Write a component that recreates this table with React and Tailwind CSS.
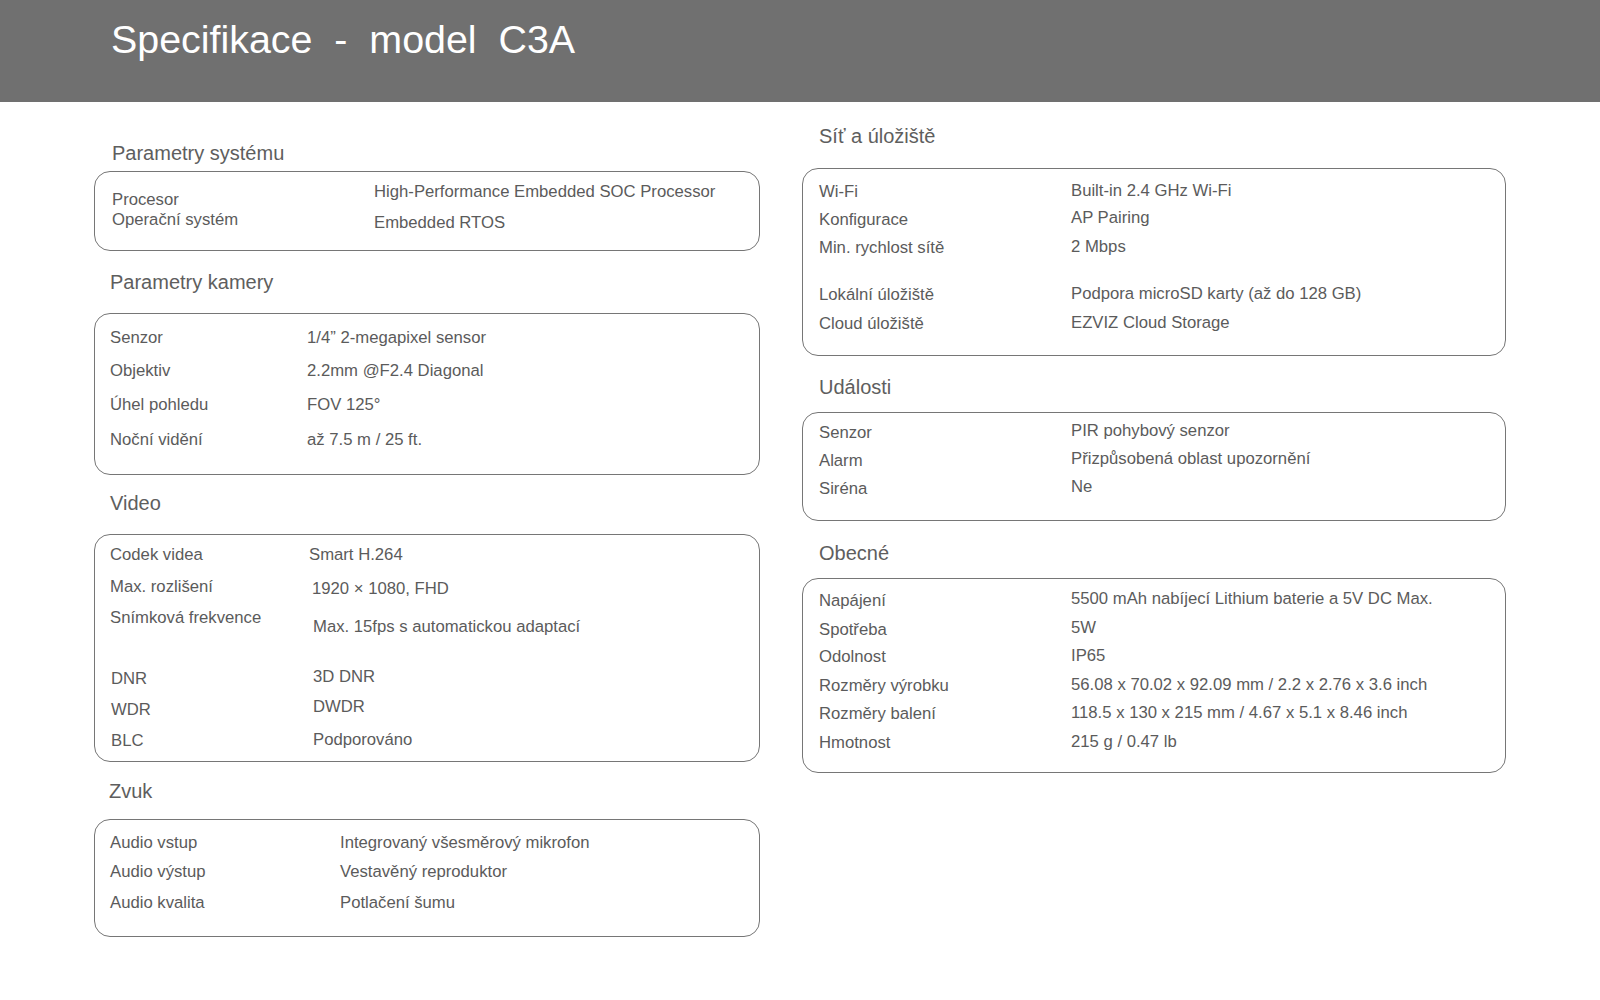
import React from "react";

const font = { fontFamily: '"Liberation Sans", Arial, sans-serif' };

function Col({ items, className }) {
  return (
    <div className={"flex flex-col pt-px " + (className || "")}>
      {items.map((it, i) => (
        <div key={i} className={"leading-[20px] whitespace-nowrap " + it.c}>
          {it.t}
        </div>
      ))}
    </div>
  );
}

function Box({ h, labelCls, valueCls, labels, values }) {
  return (
    <div className={"flex rounded-[16px] border-[1.5px] border-[#767676] text-[16.7px] text-[#5b5b5b] " + h}>
      <Col items={labels} className={labelCls} />
      <Col items={values} />
    </div>
  );
}

function Heading({ children, className }) {
  return (
    <div className={"text-[20px] leading-[24px] text-[#5e5e5e] " + className}>{children}</div>
  );
}

export default function App() {
  return (
    <div className="w-[1600px] h-[1000px] bg-white" style={font}>
      <div className="h-[102px] bg-[#707070] pl-[111px] pt-[19px]">
        <div className="text-[39.4px] leading-[40px] text-white whitespace-pre">
          {"Specifikace  -  model  C3A"}
        </div>
      </div>
      <div className="flex pl-[94px] gap-[42px]">
        {/* Left column */}
        <div className="flex flex-col w-[666px]">
          <Heading className="mt-[39px] ml-[18px]">Parametry systému</Heading>
          <div className="mt-[6px]">
            <Box
              h="h-[80px]"
              labelCls="ml-[17px] w-[262px]"
              labels={[
                { t: "Procesor", c: "mt-[17px]" },
                { t: "Operační systém", c: "mt-0" },
              ]}
              values={[
                { t: "High-Performance Embedded SOC Processor", c: "mt-[9px]" },
                { t: "Embedded RTOS", c: "mt-[11px]" },
              ]}
            />
          </div>
          <Heading className="mt-[19px] ml-[16px]">Parametry kamery</Heading>
          <div className="mt-[19px]">
            <Box
              h="h-[162px]"
              labelCls="ml-[15px] w-[197px]"
              labels={[
                { t: "Senzor", c: "mt-[13px]" },
                { t: "Objektiv", c: "mt-[13px]" },
                { t: "Úhel pohledu", c: "mt-[14px]" },
                { t: "Noční vidění", c: "mt-[15px]" },
              ]}
              values={[
                { t: "1/4” 2-megapixel sensor", c: "mt-[13px]" },
                { t: "2.2mm @F2.4 Diagonal", c: "mt-[13px]" },
                { t: "FOV 125°", c: "mt-[14px]" },
                { t: "až 7.5 m / 25 ft.", c: "mt-[15px]" },
              ]}
            />
          </div>
          <Heading className="mt-[16px] ml-[16px]">Video</Heading>
          <div className="mt-[19px]">
            <Box
              h="h-[228px]"
              labelCls="ml-[15px] w-[199px]"
              labels={[
                { t: "Codek videa", c: "mt-[9px]" },
                { t: "Max. rozlišení", c: "mt-[12px]" },
                { t: "Snímková frekvence", c: "mt-[11px]" },
                { t: "DNR", c: "mt-[41px] ml-px" },
                { t: "WDR", c: "mt-[11px] ml-px" },
                { t: "BLC", c: "mt-[11px] ml-px" },
              ]}
              values={[
                { t: "Smart H.264", c: "mt-[9px]" },
                { t: "1920 × 1080, FHD", c: "mt-[14px] ml-[3px]" },
                { t: "Max. 15fps s automatickou adaptací", c: "mt-[18px] ml-[4px]" },
                { t: "3D DNR", c: "mt-[30px] ml-[4px]" },
                { t: "DWDR", c: "mt-[10px] ml-[4px]" },
                { t: "Podporováno", c: "mt-[13px] ml-[4px]" },
              ]}
            />
          </div>
          <Heading className="mt-[17px] ml-[15px]">Zvuk</Heading>
          <div className="mt-[16px]">
            <Box
              h="h-[118px]"
              labelCls="ml-[15px] w-[230px]"
              labels={[
                { t: "Audio vstup", c: "mt-[12px]" },
                { t: "Audio výstup", c: "mt-[9px]" },
                { t: "Audio kvalita", c: "mt-[11px]" },
              ]}
              values={[
                { t: "Integrovaný všesměrový mikrofon", c: "mt-[12px]" },
                { t: "Vestavěný reproduktor", c: "mt-[9px]" },
                { t: "Potlačení šumu", c: "mt-[11px]" },
              ]}
            />
          </div>
        </div>

        {/* Right column */}
        <div className="flex flex-col w-[704px]">
          <Heading className="mt-[22px] ml-[17px]">Síť a úložiště</Heading>
          <div className="mt-[20px]">
            <Box
              h="h-[188px]"
              labelCls="ml-[16px] w-[252px]"
              labels={[
                { t: "Wi-Fi", c: "mt-[12px]" },
                { t: "Konfigurace", c: "mt-[8px]" },
                { t: "Min. rychlost sítě", c: "mt-[8px]" },
                { t: "Lokální úložiště", c: "mt-[27px]" },
                { t: "Cloud úložiště", c: "mt-[9px]" },
              ]}
              values={[
                { t: "Built-in 2.4 GHz Wi-Fi", c: "mt-[11px]" },
                { t: "AP Pairing", c: "mt-[7px]" },
                { t: "2 Mbps", c: "mt-[9px]" },
                { t: "Podpora microSD karty (až do 128 GB)", c: "mt-[27px]" },
                { t: "EZVIZ Cloud Storage", c: "mt-[9px]" },
              ]}
            />
          </div>
          <Heading className="mt-[19px] ml-[17px]">Události</Heading>
          <div className="mt-[13px]">
            <Box
              h="h-[109px]"
              labelCls="ml-[16px] w-[252px]"
              labels={[
                { t: "Senzor", c: "mt-[9px]" },
                { t: "Alarm", c: "mt-[8px]" },
                { t: "Siréna", c: "mt-[8px]" },
              ]}
              values={[
                { t: "PIR pohybový senzor", c: "mt-[7px]" },
                { t: "Přizpůsobená oblast upozornění", c: "mt-[8px]" },
                { t: "Ne", c: "mt-[8px]" },
              ]}
            />
          </div>
          <Heading className="mt-[20px] ml-[17px]">Obecné</Heading>
          <div className="mt-[13px]">
            <Box
              h="h-[195px]"
              labelCls="ml-[16px] w-[252px]"
              labels={[
                { t: "Napájení", c: "mt-[11px]" },
                { t: "Spotřeba", c: "mt-[9px]" },
                { t: "Odolnost", c: "mt-[7px]" },
                { t: "Rozměry výrobku", c: "mt-[9px]" },
                { t: "Rozměry balení", c: "mt-[8px]" },
                { t: "Hmotnost", c: "mt-[9px]" },
              ]}
              values={[
                { t: "5500 mAh nabíjecí Lithium baterie a 5V DC Max.", c: "mt-[9px]" },
                { t: "5W", c: "mt-[9px]" },
                { t: "IP65", c: "mt-[8px]" },
                { t: "56.08 x 70.02 x 92.09 mm / 2.2 x 2.76 x 3.6 inch", c: "mt-[9px]" },
                { t: "118.5 x 130 x 215 mm / 4.67 x 5.1 x 8.46 inch", c: "mt-[8px]" },
                { t: "215 g / 0.47 lb", c: "mt-[9px]" },
              ]}
            />
          </div>
        </div>
      </div>
    </div>
  );
}
